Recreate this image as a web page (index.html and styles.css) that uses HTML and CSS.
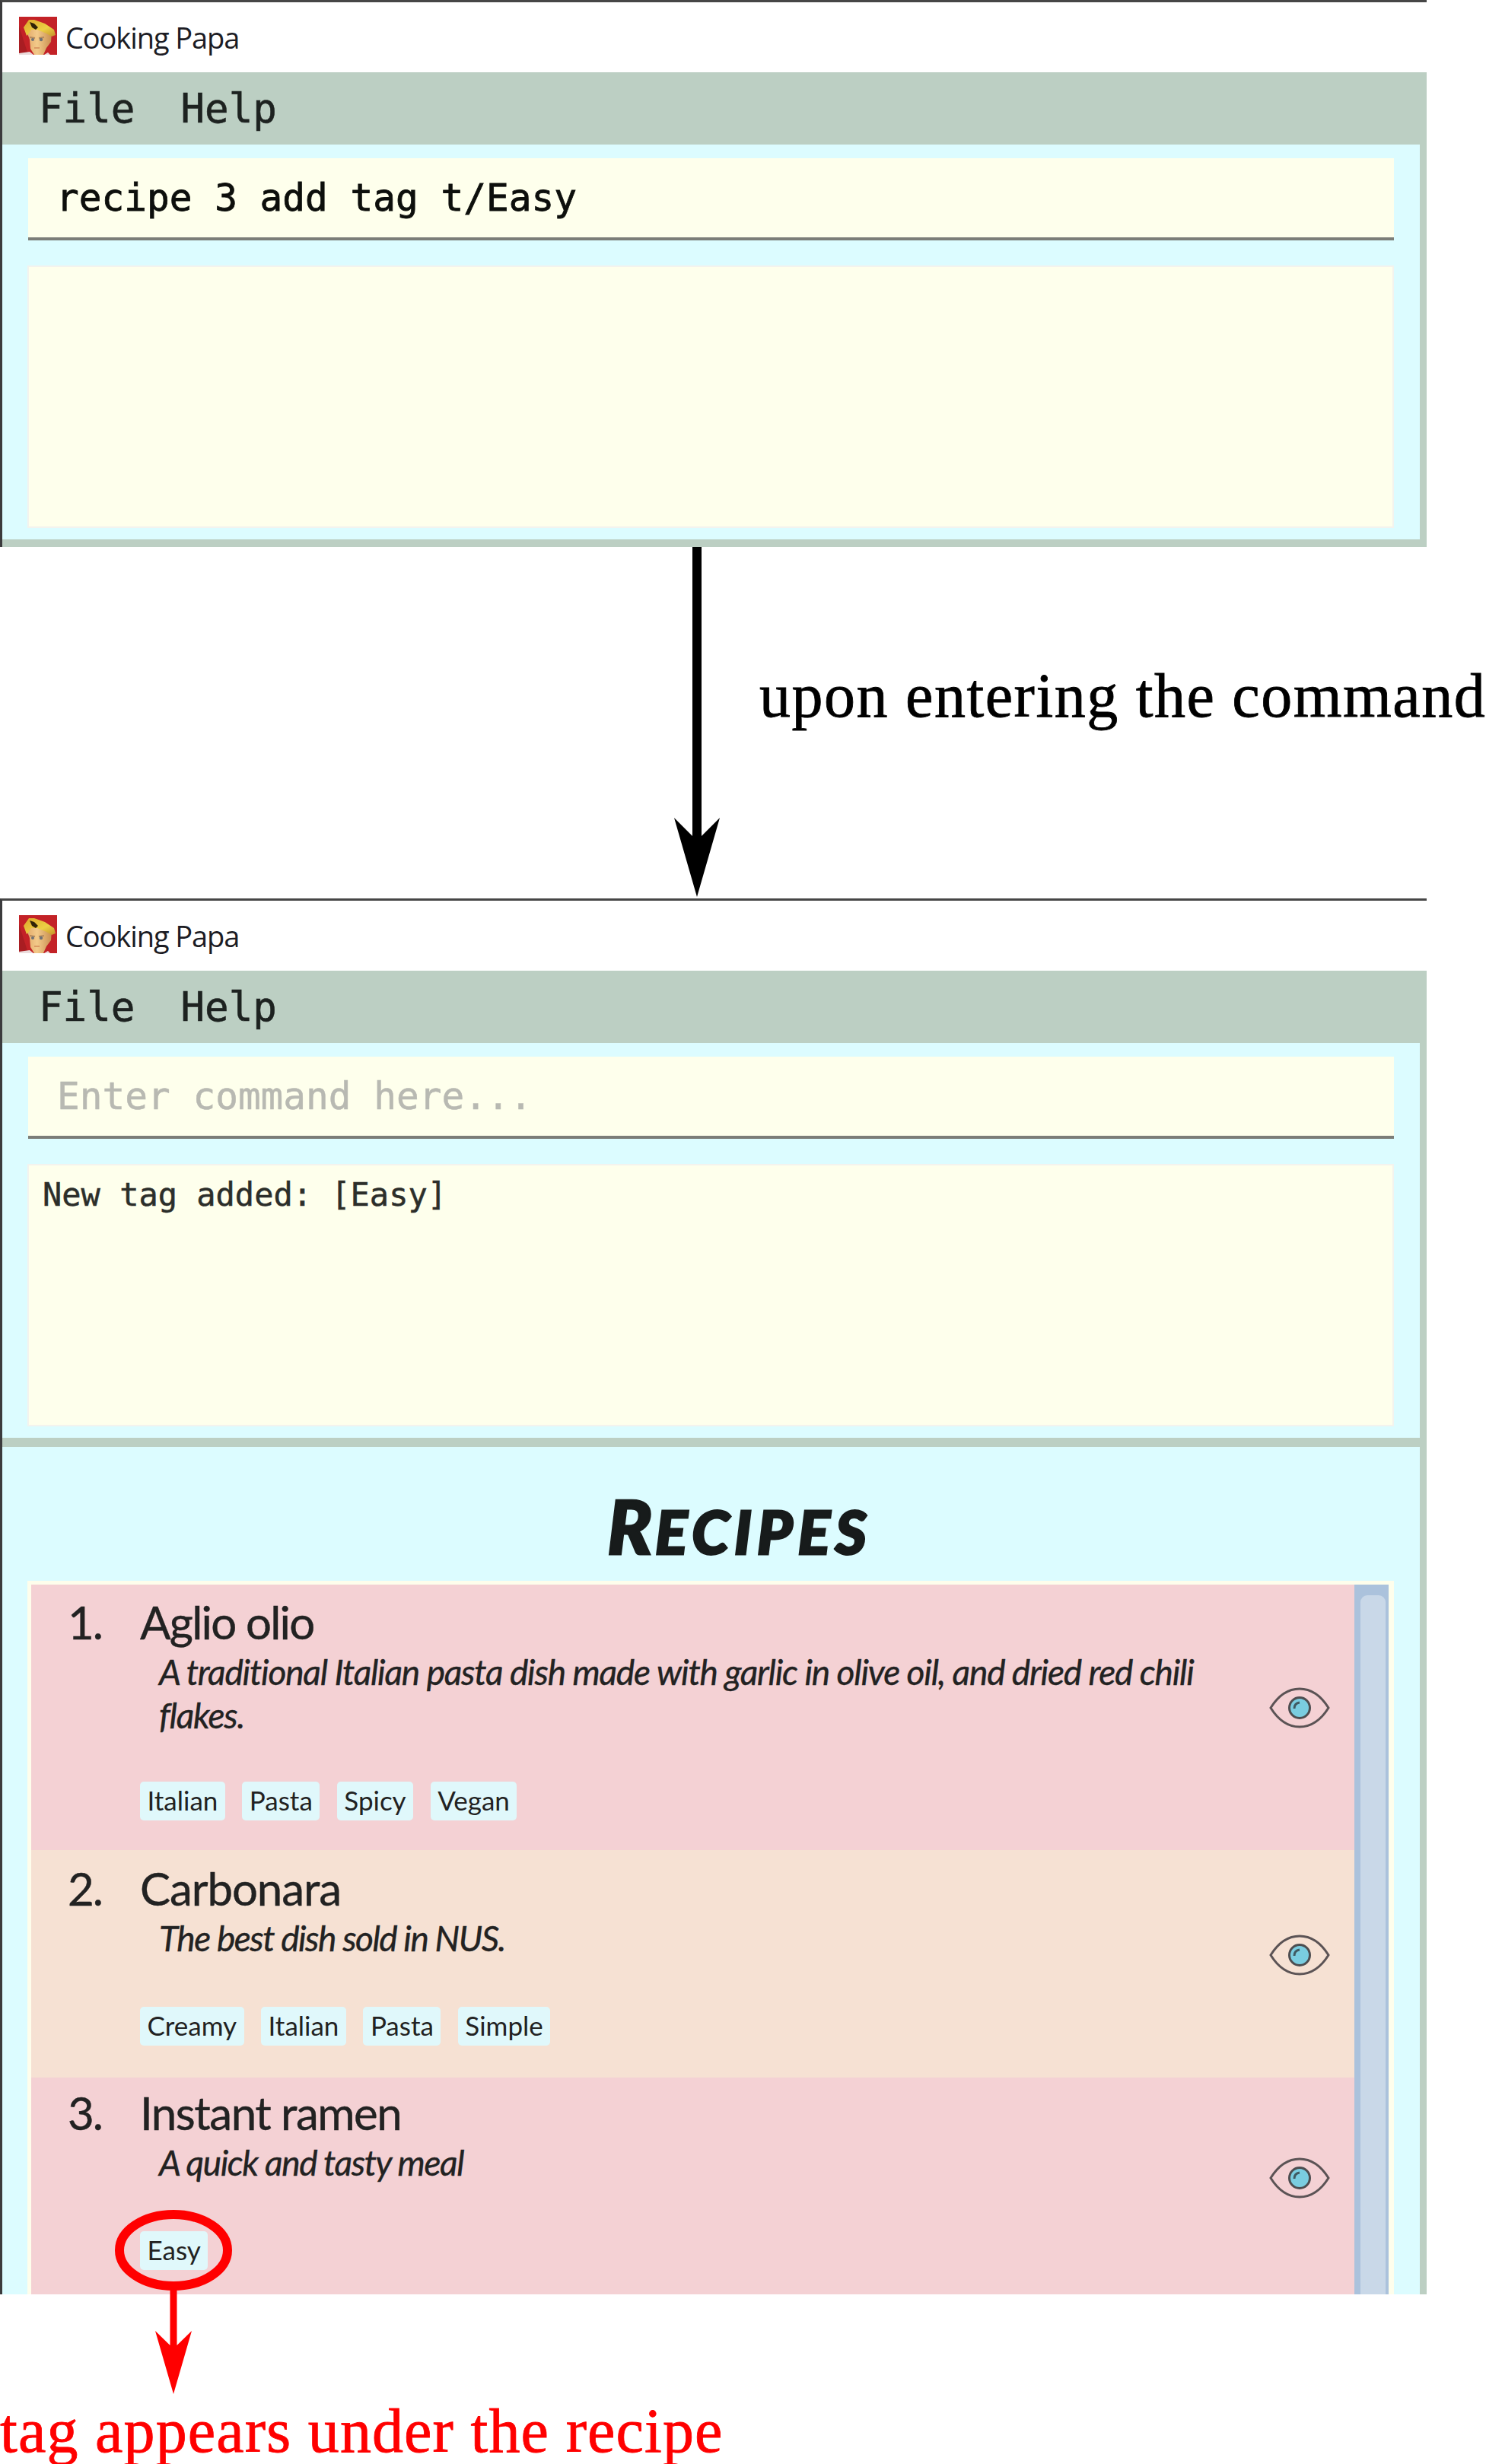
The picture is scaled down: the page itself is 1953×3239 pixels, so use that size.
FILE: index.html
```html
<!DOCTYPE html>
<html lang="en">
<head>
<meta charset="utf-8">
<title>Cooking Papa: adding a tag</title>
<link rel="stylesheet" href="styles.css">
</head>
<body>
<svg class="defs" width="0" height="0" aria-hidden="true">
  <symbol id="papa" viewBox="0 0 50 50">
    <defs>
      <linearGradient id="skin" x1="0" y1="0" x2="1" y2="0"><stop offset="0" stop-color="#e0a565"/><stop offset=".45" stop-color="#f3ca8a"/><stop offset="1" stop-color="#c98f50"/></linearGradient>
      <linearGradient id="hair" x1="0" y1="0" x2="1" y2="1"><stop offset="0" stop-color="#dda82a"/><stop offset=".6" stop-color="#ecd045"/><stop offset="1" stop-color="#c48f28"/></linearGradient>
    </defs>
    <rect width="50" height="50" fill="#c32227"/>
    <path d="M0 12L12 50H0z" fill="#a91d22"/>
    <path d="M8 14L14 30L15 42L20 50H32L36 41L42 33L43 20L30 12z" fill="url(#skin)"/>
    <path d="M6 14L13 4L20 4L34 9L46 17L48 24L43 26L36 22L24 17L16 17L13 22L10 25z" fill="url(#hair)"/>
    <path d="M14 7L20 9L25 14L22 17L17 14z" fill="#2f2308"/>
    <path d="M14 27L21 28M26 28L33 27" stroke="#b58a5c" stroke-width="2"/>
    <circle cx="18" cy="30" r="2" fill="#6f7276"/><circle cx="29" cy="30" r="2.2" fill="#6f7276"/>
    <path d="M20 41L27 41" stroke="#d58f5c" stroke-width="1.6"/>
    <path d="M0 48L14 46L19 50H0zM33 50L38 47L41 50z" fill="#eadcdc"/>
  </symbol>
  <symbol id="eye" viewBox="0 0 80 56">
    <path d="M2 28C12 12 25 3 40 3S68 12 78 28C68 44 55 53 40 53S12 44 2 28z" fill="none" stroke="#5b5355" stroke-width="3"/>
    <circle cx="40" cy="28" r="13.5" fill="#7acde0" stroke="#4d4d50" stroke-width="3"/>
    <path d="M33 29Q33 22 40 21" fill="none" stroke="#3f5a62" stroke-width="3"/>
  </symbol>
</svg>

<section class="window">
  <header class="titlebar"><svg class="logo"><use href="#papa"/></svg><span>Cooking Papa</span></header>
  <nav class="menu"><span>File</span><span>Help</span></nav>
  <div class="pane">
    <div class="command">recipe 3 add tag t/Easy</div>
    <div class="result"></div>
  </div>
</section>

<div class="step">
  <svg class="step-arrow" viewBox="0 0 60 462"><path d="M24 0H36V380L60 356L30 460L0 356L24 380z"/></svg>
  <p class="note">upon entering the command</p>
</div>

<section class="window">
  <header class="titlebar"><svg class="logo"><use href="#papa"/></svg><span>Cooking Papa</span></header>
  <nav class="menu"><span>File</span><span>Help</span></nav>
  <div class="pane">
    <div class="command placeholder">Enter command here...</div>
    <div class="result">New tag added: [Easy]</div>
  </div>
  <div class="recipes">
    <h2>R<span>ECIPES</span></h2>
    <div class="list">
      <div class="cards">
        <article class="card">
          <span class="num">1.</span>
          <div class="body">
            <h3>Aglio olio</h3>
            <p>A traditional Italian pasta dish made with garlic in olive oil, and dried red chili flakes.</p>
            <div class="tags"><span>Italian</span><span>Pasta</span><span>Spicy</span><span>Vegan</span></div>
          </div>
          <svg class="view"><use href="#eye"/></svg>
        </article>
        <article class="card">
          <span class="num">2.</span>
          <div class="body">
            <h3>Carbonara</h3>
            <p>The best dish sold in NUS.</p>
            <div class="tags"><span>Creamy</span><span>Italian</span><span>Pasta</span><span>Simple</span></div>
          </div>
          <svg class="view"><use href="#eye"/></svg>
        </article>
        <article class="card">
          <span class="num">3.</span>
          <div class="body">
            <h3>Instant ramen</h3>
            <p>A quick and tasty meal</p>
            <div class="tags">
              <span class="marked">Easy
                <svg class="callout" viewBox="0 0 154 244"><ellipse cx="77" cy="53" rx="71" ry="47"/><path d="M72.5 105H81.5V178L101 159L77 242L53 159L72.5 178z"/></svg>
              </span>
            </div>
          </div>
          <svg class="view"><use href="#eye"/></svg>
        </article>
      </div>
      <div class="scrollbar"><div class="thumb"></div></div>
    </div>
  </div>
</section>

<p class="note result-note">tag appears under the recipe</p>
</body>
</html>
```
FILE: styles.css
```css
* { box-sizing: border-box; margin: 0; padding: 0; }
body { width: 1953px; height: 3239px; background: #fff; overflow: hidden; font-family: Lato, sans-serif; color: #222; }
.defs { display: block; }
svg { display: block; }

.window { width: 1875px; border-left: 3px solid #3b3b3d; border-top: 3px solid #464646; }
.titlebar { height: 92px; display: flex; align-items: center; gap: 11px; padding-left: 22px; background: #fff; font: 38px/50px "Open Sans", sans-serif; letter-spacing: -1.1px; color: #1c1c24; }
.logo { width: 50px; height: 50px; margin-top: -4px; }
.menu { height: 95px; display: flex; gap: 60px; padding-left: 48px; background: #bccfc3; font: 52.5px/95px "DejaVu Sans Mono", monospace; color: #1d2220; -webkit-text-stroke: .6px currentColor; }
.pane { height: 529px; background: #dcfcff; border: solid #bccfc3; border-width: 0 9px 10px 0; padding: 18px 34px 0 34px; }
.command { height: 108px; padding-left: 37px; background: #feffec; border-bottom: 4px solid #7b7d78; font: 49.4px/104px "DejaVu Sans Mono", monospace; color: #0d0f0c; white-space: pre; -webkit-text-stroke: .8px currentColor; }
.placeholder { color: #b8b9b2; -webkit-text-stroke-width: .5px; padding-left: 38px; }
.result { height: 345px; margin: 33px 0 0 -1px; padding: 14px 0 0 18px; background: #feffec; border: 2px solid #f3f3ee; font: 42px/49px "DejaVu Sans Mono", monospace; color: #2c2e2a; -webkit-text-stroke: .5px currentColor; }

.step { height: 462px; display: flex; padding-left: 886px; }
.step-arrow { width: 60px; height: 462px; flex: none; }
.note { font: 82px/100px "Liberation Serif", serif; color: #000; white-space: nowrap; letter-spacing: 1.5px; -webkit-text-stroke: .8px currentColor; }
.step .note { margin: 146px 0 0 52px; }
.result-note { color: #f00; letter-spacing: 1.1px; margin-top: 130px; }

.recipes { height: 1116px; background: #dcfcff; border-right: 9px solid #bccfc3; border-top: 2px solid #bccfc3; padding: 0 34px 0 33px; display: flex; flex-direction: column; }
h2 { height: 176px; padding: 31px 0 0 76px; text-align: center; font: italic 900 97px/145px Lato, sans-serif; color: #171b1b; letter-spacing: 4px; -webkit-text-stroke: 3px #171b1b; }
h2 span { font-size: 79px; line-height: 1; letter-spacing: 7px; }
.list { flex: 1; display: flex; border: solid #fefeec; border-width: 5px 7px 0 5px; }
.cards { flex: 1; display: flex; flex-direction: column; }
.card { height: 349px; display: flex; padding: 19px 32px 22px 48px; background: #f4d1d4; --name: -1.8px; --about: -1.18px; --drop: 59px; }
.card:nth-child(2) { height: 299px; padding-top: 20px; background: #f6e1d3; --name: -1.1px; --about: -1.5px; --drop: 62px; }
.card:nth-child(3) { height: 285px; padding: 16px 32px 17px 48px; --name: -1.5px; --about: -1.4px; --drop: 62px; }
.num { width: 95px; font-size: 60px; line-height: 60px; letter-spacing: -2px; -webkit-text-stroke: .4px currentColor; }
.body { flex: 1; }
h3 { font-size: 60px; font-weight: 400; line-height: 60px; letter-spacing: var(--name); -webkit-text-stroke: .4px currentColor; }
.body p { width: 1440px; margin: 7px 0 0 25px; font-size: 46px; font-style: italic; line-height: 57px; letter-spacing: var(--about); -webkit-text-stroke: .4px currentColor; }
.tags { display: flex; gap: 22.5px; margin-top: var(--drop); }
.tags > span { padding: 0 9.5px; height: 51px; border-radius: 5px; background: #e0f8fb; font-size: 35px; line-height: 49px; }
.view { width: 80px; height: 56px; flex: none; align-self: center; margin: -22px 0 0 -60px; }
.card:nth-child(3) .view { margin-top: -20px; }
.scrollbar { width: 45px; padding: 14px 4px 0 8px; background: #abc2dc; display: flex; }
.thumb { flex: 1; background: #c9d8e8; border-radius: 9px 9px 0 0; }

.marked { position: relative; }
.callout { position: absolute; left: -33px; top: -28px; width: 154px; height: 244px; z-index: 2; overflow: visible; fill: #f00; }
.callout ellipse { fill: none; stroke: #f00; stroke-width: 12; }
```
